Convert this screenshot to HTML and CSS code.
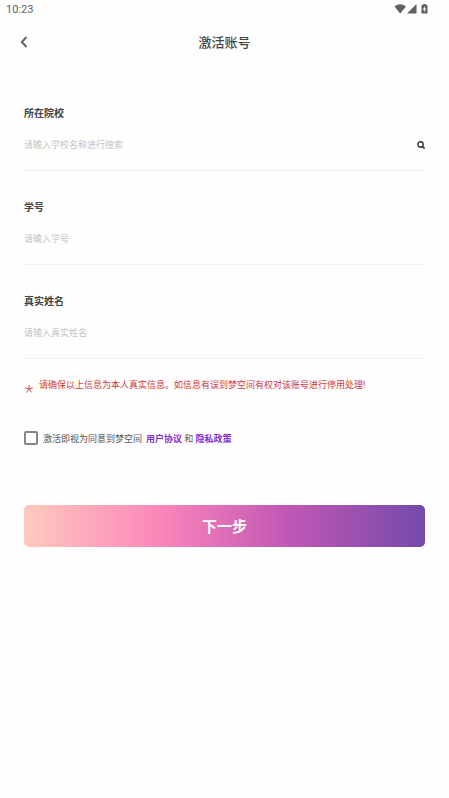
FILE: index.html
```html
<!DOCTYPE html>
<html lang="zh-CN">
<head>
  <meta charset="UTF-8" />
  <meta name="viewport" content="width=device-width, initial-scale=1.0"/>
  <title>激活账号</title>
  <link rel="stylesheet" href="styles.css">
</head>
<body>
  <div class="status-bar">
    <span>10:23</span>
    <svg class="status-icons" width="36" height="12" viewBox="0 0 36 12" fill="#616161" aria-hidden="true">
      <path d="M0.5 3.5Q6.2 -0.8 12 3.5L6.2 10.5Z"/>
      <path d="M13 10.5L22.5 1V10.5Z"/>
      <path fill-rule="evenodd" d="M27.5 2H29V1H32V2H33.5V10.5H27.5ZM30.8 3L28.8 6.8H30.2V9.2L32.2 5.6H30.8Z"/>
    </svg>
  </div>

  <header class="header">
    <button class="back" type="button" aria-label="返回">
      <svg width="8" height="12" viewBox="0 0 8 12" fill="none" stroke="#666" stroke-width="2"><path d="M6.5 1L1.8 6L6.5 11"/></svg>
    </button>
    <h1>激活账号</h1>
  </header>

  <form class="form">
    <div class="field">
      <label for="school">所在院校</label>
      <div class="input-row">
        <input id="school" type="text" placeholder="请输入学校名称进行搜索">
        <button class="search" type="button" aria-label="搜索">
          <svg width="8" height="8" viewBox="0 0 8 8" fill="none" stroke="#333"><circle cx="3.5" cy="3.5" r="2.7" stroke-width="1.4"/><path d="M5.5 5.5L7.6 7.6" stroke-width="1.6"/></svg>
        </button>
      </div>
    </div>
    <div class="field">
      <label for="number">学号</label>
      <div class="input-row">
        <input id="number" type="text" placeholder="请输入学号">
      </div>
    </div>
    <div class="field">
      <label for="name">真实姓名</label>
      <div class="input-row">
        <input id="name" type="text" placeholder="请输入真实姓名">
      </div>
    </div>

    <div class="warning">
      <svg width="8" height="8" viewBox="0 0 8 8" fill="none" stroke="#d9474b" stroke-width="1" aria-hidden="true"><path d="M4 0V4M0.2 2.8L4 4L7.8 2.8M1.6 7.4L4 4L6.4 7.4"/></svg>
      <p>请确保以上信息为本人真实信息。如信息有误到梦空间有权对该账号进行停用处理!</p>
    </div>

    <div class="agreement">
      <input id="agree" type="checkbox">
      <label for="agree">激活即视为同意到梦空间</label>
      <p><a href="#">用户协议</a> 和 <a href="#">隐私政策</a></p>
    </div>

    <button class="next" type="submit">下一步</button>
  </form>
</body>
</html>
```
FILE: styles.css
```css
* {
  box-sizing: border-box;
}

body {
  margin: 0;
  background: #fefefe;
  color: #444;
  font-family: Roboto, "Noto Sans CJK SC", sans-serif;
  font-size: 9px;
}

button {
  border: 0;
  padding: 0;
  background: none;
  font-family: inherit;
  cursor: pointer;
}

svg {
  display: block;
}

p {
  margin: 0;
}

.status-bar {
  display: flex;
  justify-content: space-between;
  align-items: center;
  height: 18px;
  padding: 0 19px 0 6px;
  color: #616161;
  font-size: 11px;
}

.header {
  display: grid;
  grid-template-columns: 24px 1fr 24px;
  align-items: center;
  height: 48px;
  padding: 0 20px;
}

.back {
  display: flex;
  height: 24px;
  align-items: center;
}

.header h1 {
  margin: 0;
  padding-bottom: 2px;
  text-align: center;
  font-size: 13px;
  font-weight: 500;
}

.form {
  padding: 38px 24px 0;
}

.field {
  margin-bottom: 27px;
}

.field label {
  display: block;
  font-size: 10px;
  font-weight: 700;
  line-height: 20px;
}

.input-row {
  display: flex;
  align-items: center;
  height: 47px;
  padding-bottom: 4px;
  border-bottom: 1px solid #f3f3f3;
}

.input-row input {
  flex: 1;
  min-width: 0;
  height: 24px;
  padding: 0;
  border: 0;
  outline: 0;
  background: none;
  color: #444;
  font-family: inherit;
  font-size: 9px;
}

.input-row input::placeholder {
  color: #c4c4c4;
}

.warning {
  display: flex;
  align-items: flex-end;
  gap: 6px;
  margin-top: -9px;
  padding-left: 1px;
  color: #cf3a3c;
}

.warning p {
  line-height: 16px;
}

.agreement {
  display: flex;
  align-items: center;
  margin: 38px 0 60px;
  color: #555;
}

.agreement input {
  appearance: none;
  width: 14px;
  height: 14px;
  margin: 0 5px 0 0;
  border: 2px solid #858585;
  border-radius: 2px;
}

.agreement input:checked {
  background: #8130d1;
}

.agreement label {
  margin-right: 4px;
}

.agreement a {
  color: #8130d1;
  font-weight: 700;
  text-decoration: none;
}

.next {
  width: 100%;
  height: 42px;
  padding-bottom: 2px;
  border-radius: 5px;
  background: linear-gradient(90deg, #ffcabd 0%, #fc87bb 33%, #c157b5 66%, #744aaa 100%);
  color: #fff;
  font-size: 15px;
  font-weight: 700;
}
```
